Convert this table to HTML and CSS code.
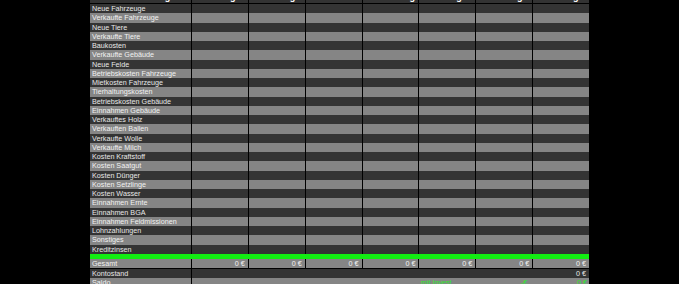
FILE: index.html
```html
<!DOCTYPE html>
<html lang="de">
<head>
<meta charset="utf-8">
<link rel="stylesheet" href="styles.css">
</head>
<body>
<div class="sheet">
  <div class="row head">
    <div class="c lbl">Einnahmen / Ausgaben</div>
    <div class="c">Montag</div><div class="c">Dienstag</div><div class="c">Mittwoch</div><div class="c">Donnerstag</div><div class="c">Freitag</div><div class="c">Samstag</div><div class="c">Sonntag</div>
  </div>
  <div id="body"></div>
  <div class="green"></div>
  <div class="row light total">
    <div class="c lbl">Gesamt</div>
    <div class="c num">0 €</div><div class="c num">0 €</div><div class="c num">0 €</div><div class="c num">0 €</div><div class="c num">0 €</div><div class="c num">0 €</div><div class="c num">0 €</div>
  </div>
  <div class="row dark wide gap">
    <div class="c lbl">Kontostand</div>
    <div class="c span num">0 €</div>
  </div>
  <div class="row light wide">
    <div class="c lbl">Saldo</div>
    <div class="c span saldo">
      <span class="inv">mit Invest</span>
      <span class="mid">-€</span>
      <span class="end">0 €</span>
    </div>
  </div>
</div>
<script src="app.js"></script>
</body>
</html>
```

FILE: app.js
```js
const labels = ["Neue Fahrzeuge","Verkaufte Fahrzeuge","Neue Tiere","Verkaufte Tiere","Baukosten","Verkaufte Gebäude","Neue Felde","Betriebskosten Fahrzeuge","Mietkosten Fahrzeuge","Tierhaltungskosten","Betriebskosten Gebäude","Einnahmen Gebäude","Verkauftes Holz","Verkauften Ballen","Verkaufte Wolle","Verkaufte Milch","Kosten Kraftstoff","Kosten Saatgut","Kosten Dünger","Kosten Setzlinge","Kosten Wasser","Einnahmen Ernte","Einnahmen BGA","Einnahmen Feldmissionen","Lohnzahlungen","Sonstiges","Kreditzinsen"];
const body = document.getElementById("body");
labels.forEach((l, i) => {
  const r = document.createElement("div");
  r.className = "row " + (i % 2 === 0 ? "dark" : "light");
  let h = '<div class="c lbl">' + l + '</div>';
  for (let k = 0; k < 7; k++) h += '<div class="c"></div>';
  r.innerHTML = h;
  body.appendChild(r);
});
```

FILE: styles.css
```css
html, body {
  margin: 0;
  padding: 0;
  background: #000;
  height: 100%;
  overflow: hidden;
}
.sheet {
  margin-left: 90px;
  width: 499px;
  margin-top: -8px;
  font-family: "Liberation Sans", Arial, sans-serif;
  font-size: 7.2px;
  color: #e8e8e8;
}
.row {
  display: grid;
  grid-template-columns: 101px repeat(7, 1fr);
  height: 9.26px;
  line-height: 9.26px;
}
.row .c {
  border-left: 1px solid #000;
  white-space: nowrap;
  overflow: hidden;
  padding: 0 3px 0 2px;
}
.row .c.lbl {
  border-left: 0;
}
.head {
  height: 11px;
  line-height: 10px;
  background: #333;
  border-bottom: 1px solid #000;
  font-weight: bold;
  font-size: 9px;
  color: #fff;
  text-align: center;
}
.head .c.lbl { text-align: left; }
.dark { background: #343434; }
.light { background: #858585; color: #f2f2f2; }
.green {
  height: 5px;
  background: #12ee12;
}
.num { text-align: right; }
.wide { grid-template-columns: 101px 1fr; }
.gap { border-top: 1px solid #000; }
.row .c.saldo {
  display: grid;
  grid-template-columns: repeat(7, 1fr);
  color: #2ee82e;
  padding: 0;
}
.inv { grid-column: 5; padding-left: 2px; }
.mid { grid-column: 6; text-align: right; padding-right: 5px; }
.end { grid-column: 7; text-align: right; padding-right: 2px; }
```
